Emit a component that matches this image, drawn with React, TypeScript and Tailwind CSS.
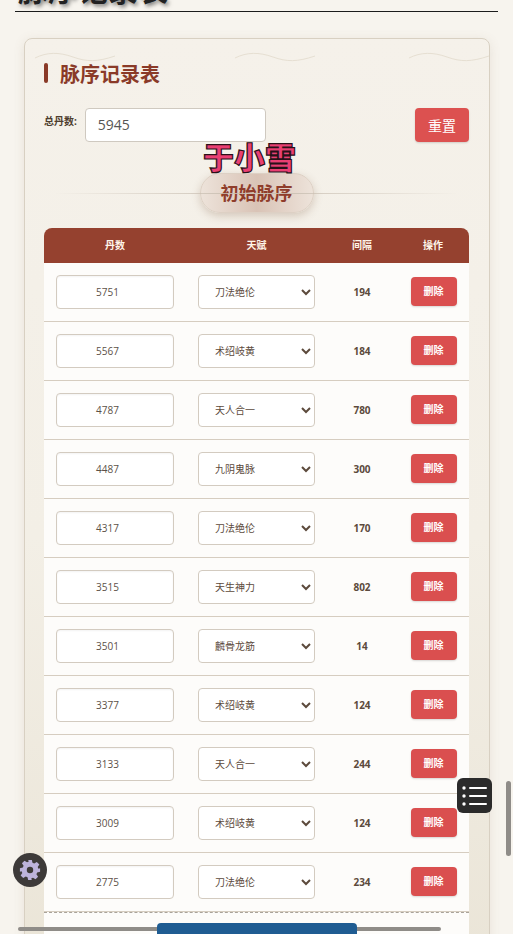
const rows = [
  { dan: "5751", talent: "刀法绝伦", gap: 194 },
  { dan: "5567", talent: "术绍岐黄", gap: 184 },
  { dan: "4787", talent: "天人合一", gap: 780 },
  { dan: "4487", talent: "九阴鬼脉", gap: 300 },
  { dan: "4317", talent: "刀法绝伦", gap: 170 },
  { dan: "3515", talent: "天生神力", gap: 802 },
  { dan: "3501", talent: "麟骨龙筋", gap: 14 },
  { dan: "3377", talent: "术绍岐黄", gap: 124 },
  { dan: "3133", talent: "天人合一", gap: 244 },
  { dan: "3009", talent: "术绍岐黄", gap: 124 },
  { dan: "2775", talent: "刀法绝伦", gap: 234 },
];

const talents = ["刀法绝伦", "术绍岐黄", "天人合一", "九阴鬼脉", "天生神力", "麟骨龙筋"];

/* faint wave lines on the card */
function Wave({ className }: { className: string }) {
  return (
    <svg className={className} width="80" height="12" viewBox="0 0 80 12" fill="none">
      <path d="M0 7C12 1 24 1 38 6S62 11 80 5" stroke="#e6dfd2" strokeWidth="1" />
    </svg>
  );
}

function Row({ dan, talent, gap }: { dan: string; talent: string; gap: number }) {
  return (
    <div className="grid h-[59px] grid-cols-[142px_141px_70px_72px] items-center border-b border-[#d6cdc0] bg-[#fdfcfa]">
      <div className="px-3">
        <input
          defaultValue={dan}
          className="h-[34px] w-full rounded border border-[#d3cbc0] bg-white pr-[15px] text-center text-[10px] text-[#5c5148] shadow-[inset_0_1px_2px_rgba(0,0,0,0.05)] outline-none"
        />
      </div>
      <div className="px-3">
        <select
          defaultValue={talent}
          className="h-[34px] w-full rounded border border-[#d3cbc0] bg-white pl-3 text-[10px] text-[#5c4a3c] outline-none"
        >
          {talents.map((t) => (
            <option key={t} value={t}>
              {t}
            </option>
          ))}
        </select>
      </div>
      <div className="text-center text-[10px] font-bold text-[#5c4a3c]">{gap}</div>
      <div className="flex justify-center pb-[2px] pl-[1px]">
        <button className="h-[29px] w-[46px] rounded bg-[#da4f4f] text-[10px] font-bold text-white shadow-[0_1px_2px_rgba(0,0,0,0.15)]">
          删除
        </button>
      </div>
    </div>
  );
}

export default function App() {
  return (
    <div className="relative h-[934px] w-[513px] overflow-hidden bg-[#f7f4ee] font-['Open_Sans','Noto_Sans_CJK_SC',sans-serif]">
      {/* page heading, scrolled mostly out of view */}
      <div className="ml-[15px] flex h-[12px] w-[483px] items-end border-b border-[#1c1c1c] pl-[3px]">
        <h1 className="mb-[3px] shrink-0 text-[30px] leading-[36px] font-bold text-[#222] [text-shadow:2px_2px_4px_rgba(0,0,0,0.55)]">
          脉序记录表
        </h1>
      </div>

      {/* card */}
      <div className="relative mt-[26px] ml-[24px] h-[1000px] w-[466px] rounded-lg border border-[#d8d0c2] bg-gradient-to-b from-[#f5f1ea] via-[#f3efe6] to-[#e9e3d5] pt-[24px] pr-[20px] pl-[19px] shadow-[0_2px_12px_rgba(120,100,70,0.12)]">
        <Wave className="absolute top-[12px] left-[10px]" />
        <Wave className="absolute top-[12px] left-[210px]" />
        <Wave className="absolute top-[12px] right-[0px]" />

        <div className="flex h-[20px] items-center gap-[11px]">
          <span className="h-[20px] w-[4px] rounded-sm bg-[#8a3a28]" />
          <h2 className="relative top-[2px] ml-[1px] text-[20px] font-bold text-[#8a3a28]">脉序记录表</h2>
        </div>

        <div className="mt-[25px] flex items-start justify-between">
          <div className="flex items-start gap-[8px]">
            <label className="mt-[6px] text-[10px] font-bold text-[#4e3d2e]">总丹数:</label>
            <input
              defaultValue="5945"
              className="h-[34px] w-[181px] rounded border border-[#cfc9c0] bg-white px-3 pb-[2px] text-[14px] text-[#555] outline-none"
            />
          </div>
          <button className="h-[34px] w-[54px] rounded bg-[#dc5150] text-[14px] text-white shadow-[0_1px_2px_rgba(0,0,0,0.15)]">
            重置
          </button>
        </div>

        <div className="relative mt-[31px] mb-[15px] flex justify-center">
          <div className="flex h-[40px] w-[114px] items-center justify-center rounded-full border border-[#ddd0c4] bg-gradient-to-r from-[#ede3da] via-[#d9c3b6] to-[#ede3da] text-[18px] font-bold text-[#8f3d2b] shadow-[0_3px_8px_rgba(120,80,50,0.25)]">
            初始脉序
          </div>
          <div className="absolute top-[20px] right-[10px] left-[10px] h-px bg-gradient-to-r from-transparent via-[#c9bfb2] to-transparent" />
        </div>

        {/* table */}
        <div className="grid h-[35px] grid-cols-[142px_141px_70px_72px] items-center rounded-t-lg bg-[#95412f] text-center text-[10px] font-bold text-[#fff6ea]">
          <div>丹数</div>
          <div>天赋</div>
          <div>间隔</div>
          <div>操作</div>
        </div>
        {rows.map((r) => (
          <Row key={r.dan} {...r} />
        ))}
        <div className="h-[60px] border-t border-dashed border-[#a9a39a] bg-[#fdfcfa] pt-[10px]">
          <button className="relative z-10 mx-auto block h-[40px] w-[200px] rounded bg-[#1f5c92]" />
        </div>
      </div>

      {/* overlays */}
      <div className="absolute top-[137px] left-[203px] text-[31px] leading-[41px] font-black text-[#ea3f72] [-webkit-text-stroke:1.2px_#2a1018]">
        于小雪
      </div>

      <div className="absolute top-[778px] left-[457px] flex h-[35px] w-[35px] items-center justify-center rounded-md bg-[#2b2b2b]">
        <svg width="26" height="20" viewBox="0 0 26 20" fill="#fff">
          <circle cx="2" cy="2" r="1.7" />
          <circle cx="2" cy="10" r="1.7" />
          <circle cx="2" cy="18" r="1.7" />
          <rect x="7" y="0.9" width="18" height="2.2" rx="1" />
          <rect x="7" y="8.9" width="18" height="2.2" rx="1" />
          <rect x="7" y="16.9" width="18" height="2.2" rx="1" />
        </svg>
      </div>

      <div className="absolute top-[853px] left-[13px] flex h-[34px] w-[34px] items-center justify-center rounded-full bg-[#3d3a39]">
        <svg width="22" height="22" viewBox="0 0 24 24">
          <path
            fill="#bdb3dc"
            fillRule="evenodd"
            d="M10 1h4l.7 3.2 1.9.8 2.8-1.8 2.8 2.8-1.8 2.8.8 1.9L23 10v4l-3.2.7-.8 1.9 1.8 2.8-2.8 2.8-2.8-1.8-1.9.8L14 23h-4l-.7-3.2-1.9-.8-2.8 1.8-2.8-2.8 1.8-2.8-.8-1.9L1 14v-4l3.2-.7.8-1.9-1.8-2.8 2.8-2.8 2.8 1.8 1.9-.8L10 1Zm2 7.5a3.5 3.5 0 1 0 0 7 3.5 3.5 0 0 0 0-7Z"
          />
        </svg>
      </div>

      {/* scrollbars */}
      <div className="absolute top-[781px] left-[506px] h-[75px] w-[5px] rounded-full bg-[#8f8c88]" />
      <div className="absolute top-[927px] left-[18px] h-[4px] w-[423px] rounded-full bg-[#8f8c88]" />
    </div>
  );
}
